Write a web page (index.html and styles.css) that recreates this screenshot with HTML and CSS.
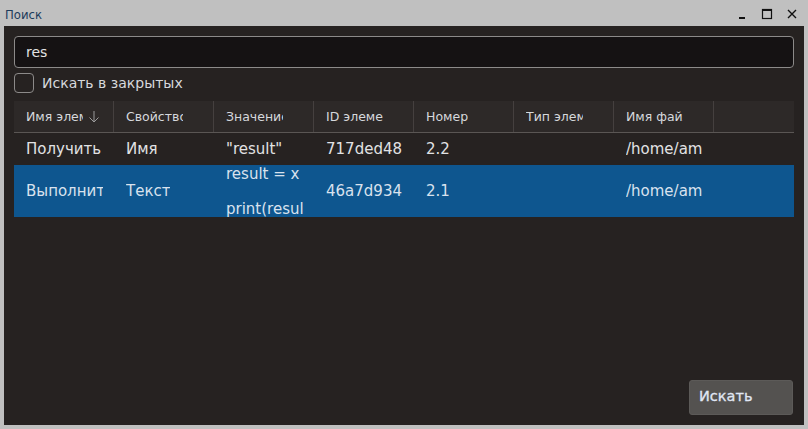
FILE: index.html
```html
<!DOCTYPE html>
<html lang="ru">
<head>
<meta charset="utf-8">
<link rel="stylesheet" href="styles.css">
</head>
<body>
<div class="window">
  <div class="titlebar">
    <span class="title">Поиск</span>
    <div class="controls">
      <svg class="ctl" width="12" height="12" viewBox="0 0 12 12"><rect x="3" y="9" width="6" height="2" fill="#111"/></svg>
      <svg class="ctl" width="12" height="12" viewBox="0 0 12 12"><rect x="1.5" y="1.5" width="9" height="9" fill="none" stroke="#111" stroke-width="1.2"/><rect x="1.5" y="1.5" width="9" height="1.5" fill="#111"/></svg>
      <svg class="ctl" width="12" height="12" viewBox="0 0 12 12"><path d="M2 2 L10 10 M10 2 L2 10" stroke="#111" stroke-width="1.4"/></svg>
    </div>
  </div>
  <div class="content">
    <div class="search-input">res</div>
    <label class="check-row"><span class="checkbox"></span><span class="check-label">Искать в закрытых</span></label>
    <div class="table">
      <div class="thead">
        <div class="th sorted"><span class="th-text">Имя элемента</span><svg class="sort" width="12" height="14" viewBox="0 0 12 14"><path d="M6 1 V12 M1.5 7.5 L6 12 L10.5 7.5" fill="none" stroke="#9a9a9a" stroke-width="1"/></svg></div>
        <div class="th"><span class="th-text">Свойство</span></div>
        <div class="th"><span class="th-text">Значение</span></div>
        <div class="th"><span class="th-text">ID элемента</span></div>
        <div class="th"><span class="th-text">Номер</span></div>
        <div class="th"><span class="th-text">Тип элемента</span></div>
        <div class="th"><span class="th-text">Имя файла</span></div>
        <div class="th last"></div>
      </div>
      <div class="tr">
        <div class="td"><span class="cell">Получить</span></div>
        <div class="td"><span class="cell">Имя</span></div>
        <div class="td"><span class="cell">"result"</span></div>
        <div class="td"><span class="cell">717ded48</span></div>
        <div class="td"><span class="cell">2.2</span></div>
        <div class="td"></div>
        <div class="td"><span class="cell">/home/am</span></div>
      </div>
      <div class="tr selected">
        <div class="td"><span class="cell">Выполнить</span></div>
        <div class="td"><span class="cell">Текст</span></div>
        <div class="td multi"><span class="cell">result = x<br><br>print(result)</span></div>
        <div class="td"><span class="cell">46a7d934</span></div>
        <div class="td"><span class="cell">2.1</span></div>
        <div class="td"></div>
        <div class="td"><span class="cell">/home/am</span></div>
      </div>
    </div>
    <div class="footer">
      <button class="btn">Искать</button>
    </div>
  </div>
</div>
</body>
</html>
```
FILE: styles.css
```css
html, body {
  margin: 0;
  padding: 0;
}
body {
  background: #c0c0c0;
  width: 808px;
  height: 429px;
  overflow: hidden;
  font-family: "DejaVu Sans", sans-serif;
}
.window {
  display: flex;
  flex-direction: column;
}
.titlebar {
  height: 26px;
  display: flex;
  align-items: center;
  justify-content: space-between;
  padding: 0 10px 0 5px;
}
.title {
  font-family: "DejaVu Sans Condensed", "DejaVu Sans", sans-serif;
  font-size: 13px;
  color: #1d3b5c;
  margin-top: 2px;
}
.controls {
  display: flex;
  gap: 13px;
  align-items: center;
  margin-top: 2px;
}
.content {
  margin: 0 4px;
  height: 399px;
  background: #262221;
  box-sizing: border-box;
  padding: 10px;
  display: flex;
  flex-direction: column;
}
.search-input {
  height: 32px;
  box-sizing: border-box;
  border: 1px solid #8c8a89;
  border-radius: 4px;
  background: #151213;
  color: #e2e2e2;
  font-size: 14px;
  line-height: 30px;
  padding-left: 11px;
}
.check-row {
  display: flex;
  align-items: center;
  margin-top: 5px;
  height: 20px;
}
.checkbox {
  width: 20px;
  height: 20px;
  box-sizing: border-box;
  border: 1px solid #8c8a89;
  border-radius: 4px;
}
.check-label {
  margin-left: 8px;
  font-size: 14px;
  color: #d6d8dc;
}
.table {
  margin-top: 8px;
  width: 780px;
}
.thead {
  display: grid;
  grid-template-columns: repeat(7, 100px) 80px;
  height: 32px;
  background: #2d2928;
  border-bottom: 1px solid #5a5654;
  box-sizing: border-box;
}
.th {
  border-right: 1px solid #45403f;
  display: flex;
  align-items: center;
  padding-left: 12px;
  overflow: hidden;
  white-space: nowrap;
  font-size: 12.5px;
  color: #d6d8dc;
}
.th.last {
  border-right: none;
}
.th-text {
  overflow: hidden;
  display: block;
  max-width: 57px;
}
.sort {
  margin-left: 5px;
  flex-shrink: 0;
}
.tr {
  display: grid;
  grid-template-columns: repeat(7, 100px) 80px;
  height: 32px;
}
.tr.selected {
  background: #0e568f;
  height: 52px;
}
.td {
  display: flex;
  align-items: center;
  padding-left: 12px;
  overflow: hidden;
  white-space: nowrap;
  font-size: 15px;
  color: #e2e2e4;
}
.cell {
  display: block;
  max-width: 77px;
  overflow: hidden;
}
.selected .td {
  color: #d9e2ee;
}
.td.multi {
  display: block;
  line-height: 17.5px;
  margin-top: 1px;
}
.footer {
  margin-top: auto;
  display: flex;
  justify-content: flex-end;
  padding-right: 1px;
}
.btn {
  width: 104px;
  height: 35px;
  background: #545250;
  border: 1px solid #5c5a58;
  border-radius: 3px;
  color: #e0e7f4;
  font-family: "DejaVu Sans", sans-serif;
  font-size: 14.5px;
  font-weight: 500;
  text-align: left;
  padding: 0 0 4px 9px;
  -webkit-text-stroke: 0.3px #e0e7f4;
}
```
